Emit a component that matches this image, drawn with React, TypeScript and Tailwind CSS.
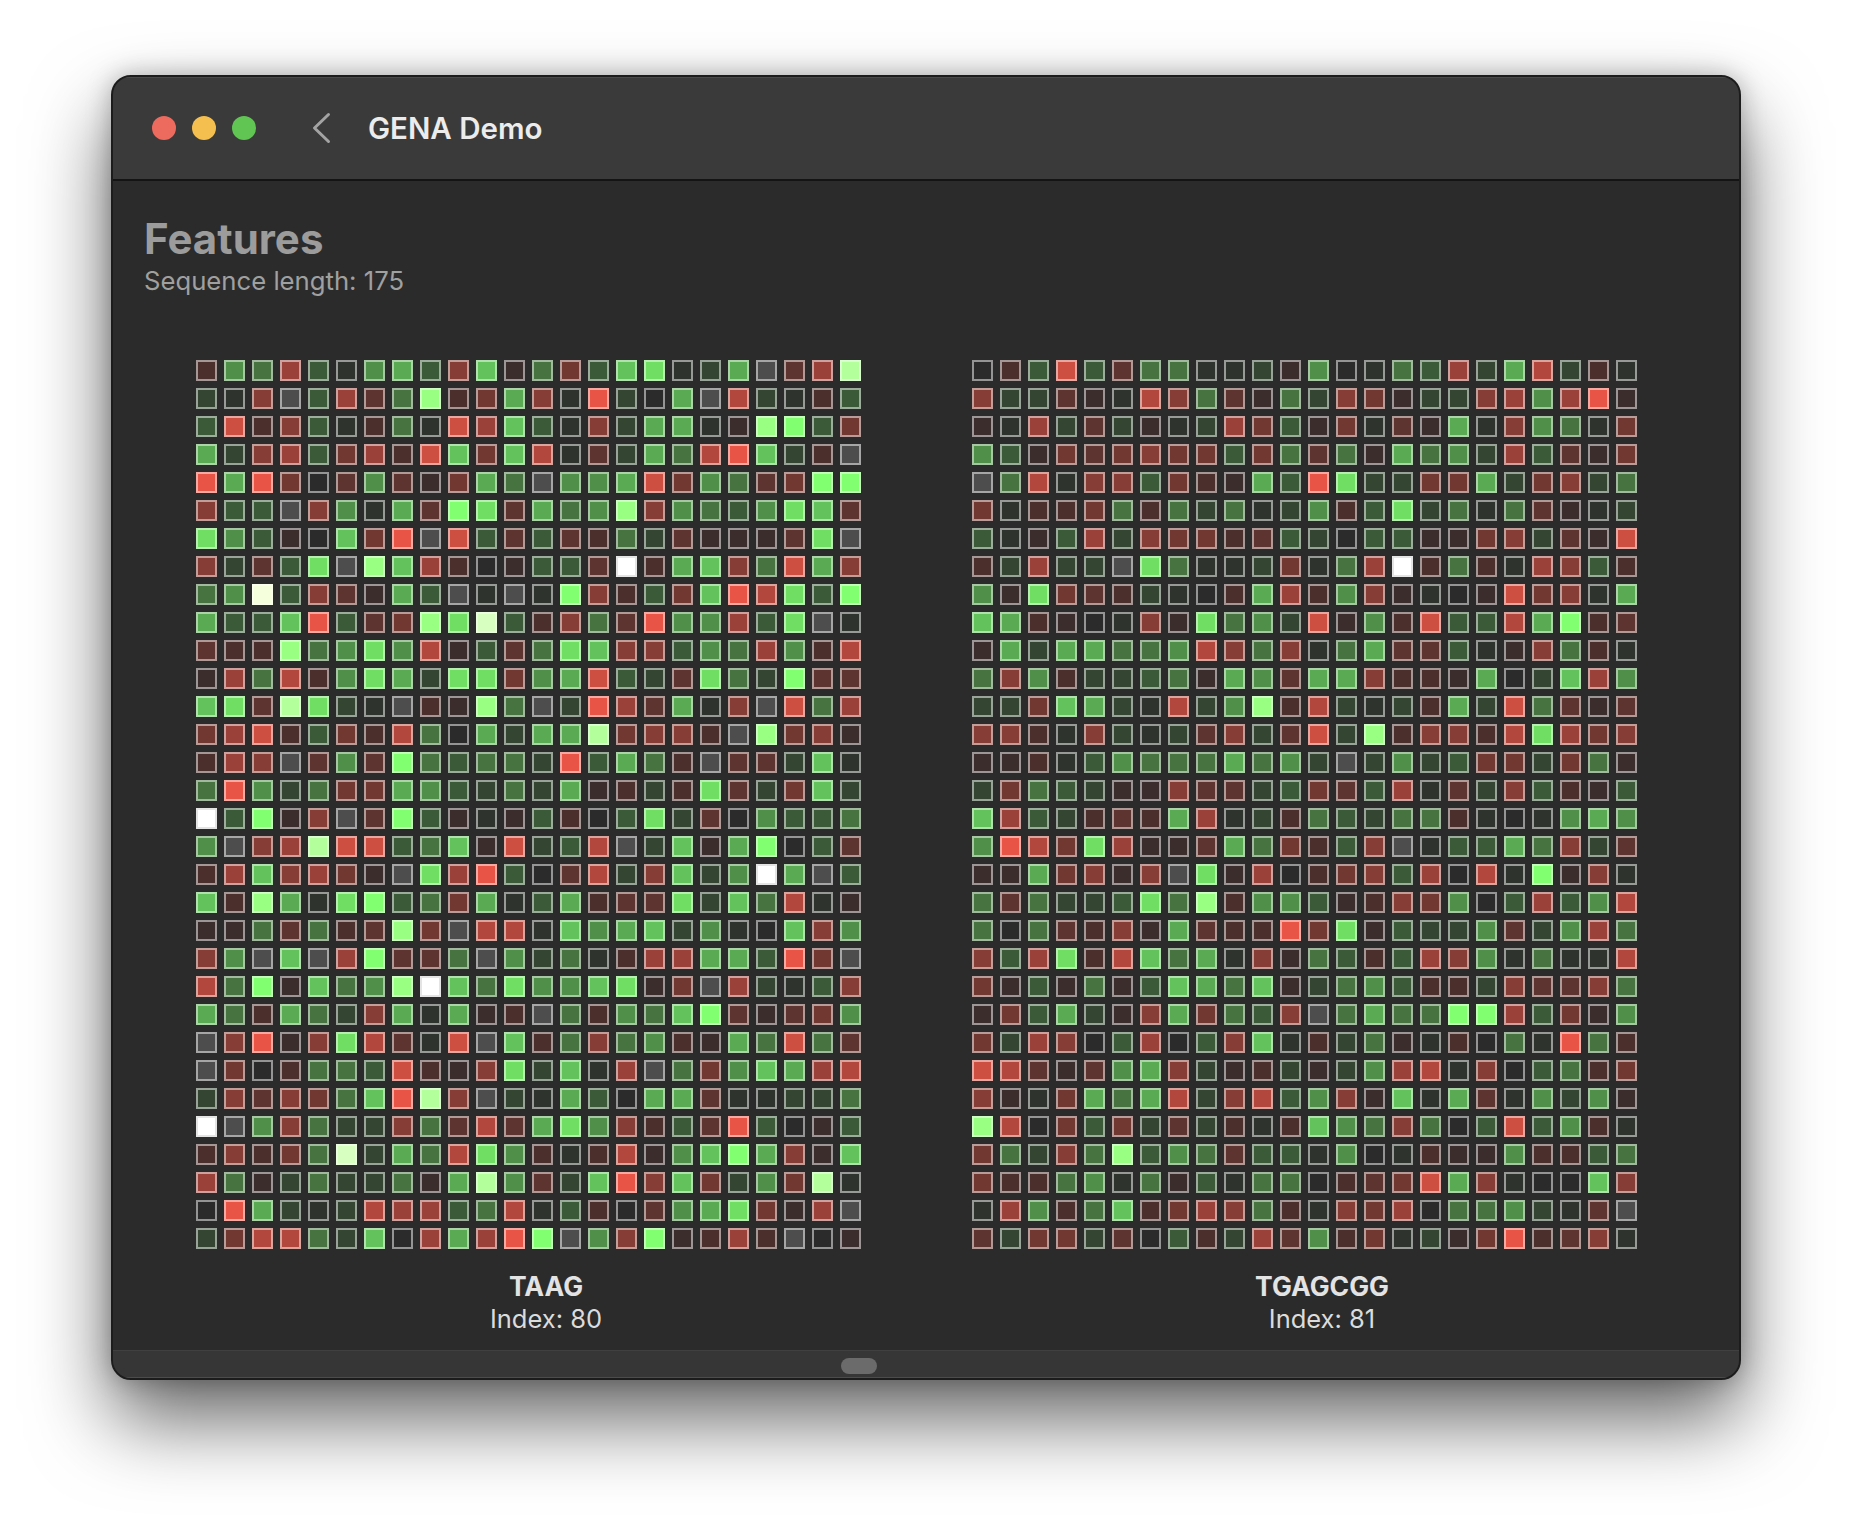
const cellColors: Record<string, string> = {
  ".": "bg-[#2b2b2b]",
  _: "bg-[#4d4d4d]",
  a: "bg-[#2e342d]",
  b: "bg-[#344632]",
  c: "bg-[#3b5a38]",
  d: "bg-[#46733f]",
  e: "bg-[#4f8f49]",
  f: "bg-[#5aa953]",
  g: "bg-[#63c25b]",
  h: "bg-[#6fde62]",
  i: "bg-[#82ff70]",
  j: "bg-[#99ff82]",
  k: "bg-[#b3ff9c]",
  Z: "bg-[#d6ffc0]",
  Y: "bg-[#f6ffdc]",
  A: "bg-[#3a2d2c]",
  B: "bg-[#4a2f2d]",
  C: "bg-[#5e3430]",
  D: "bg-[#713832]",
  E: "bg-[#853d36]",
  F: "bg-[#9a423a]",
  G: "bg-[#b2483d]",
  H: "bg-[#cc4f41]",
  I: "bg-[#e85547]",
  W: "bg-white",
};

const taag = [
  "BedFcaefcEgAdDcghabf_CFk",
  "baE_cFCdjBDfEaIb.f_GbaBc",
  "cHBEcaBdaHFgcaEbffaAjicD",
  "fbEFcDFBHgDgGaCbfdGIgbB_",
  "IfID.CeCADfd_eefHDedCDii",
  "Ecc_EeafCihCfdejEedcehgC",
  "hecA.gDI_HcCcCBdbCAAACh_",
  "EbCch_jgFB.AccCWBfgEdHfE",
  "deYcECAfc_a_aiEBcDgIGhci",
  "fccgIcCDjhZcBEdCIeeFch_a",
  "CBBjdeheGAcCdhgEEcedFeBG",
  "AFdGBehfbhhDefHcbChdbiCC",
  "ghCkhba_BAjd_bIFCfaE_HdF",
  "DFHBcDBGd.fbffkDEEB_jDEA",
  "BFE_CeCidcddbIcfdB_CCbga",
  "dIebdDDfecbdbfABbBhCbDgb",
  "WciAE_CicAaAcB.chbC.eccd",
  "e_EFkHHcdgAHbcG_bgAfi.cC",
  "BFgEFDA_hFIc.CGbEgbeWf_c",
  "gBjfahicdDfacfBCChbgdGaA",
  "AAdCdBCjD_GGagefgbea.gEe",
  "Ee_g_FiCCd_ebdaBFFffcID_",
  "GdiAgdejWgdheeghAD_FbacE",
  "fdBfdbEfafAB_dBedgiCACDe",
  "_EIAEhGCaH_gBdEdeBAfdHdC",
  "_D.BddcHBAEhbgaF_dDegfFG",
  "bECEDdgIkE_bafc.ffCaabbd",
  "W_eEdbbEdCGCfheEBcCIc.Ac",
  "BEBDdZbfdGheBaBGAegifEAg",
  "FdAbdbbdAfkeCbgIEgDbeDka",
  ".IfbabGFFcdGacB.CefhDAF_",
  "bDGGdbg.FfFIi_eEiABFB_.A",
];

const tgagcgg = [
  ".BcHcCddaabAe.adcFbfGbBa",
  "EbbCAaGEdCAdbEDAbbEFeFIA",
  "AaFbCbAabFDcADaCAfaEedaD",
  "ecADCDEDDcDdCdAfdebFcCAD",
  "_dGaEEcDBAfcIhbbDDfbDEbd",
  "DaBBDdBdbdabeBchbdadCAab",
  "caAcFbEDDBCcb.ccAADEbCAH",
  "BbFbb_hdaabDadFWBdBaFEcB",
  "eAhDCBba.BfFBeEAa.AHDEaf",
  "gfBA.aEAhdebHAeBHccGfiBC",
  "AfbffddeGEdEadfCCcaAEdBa",
  "dEeBbbcdAfeCffEBBAf.bgFe",
  "bbDgfbaGbejBGbabBfbHdCAC",
  "EEBaEbabCEbCHbjBEEBGhFDE",
  "AABacedddfdeb_bebcDDbDdA",
  "bDdcbAAECCbcDCcFaCbEcBAc",
  "gFcbBCBfFabBdcbddBa.aefe",
  "eIGDhFAACfdDBcE_accfdEbC",
  "AAfDEAE_hAF.BDEcF.GaiAEa",
  "dCdbbchdjBeecABEDe.cFceG",
  "d.dCBEAfCBBIDhAcbbeCbeFd",
  "EcFhBGgdfaEAdcBcFEeadaaG",
  "DAcAdAcgfdgAbdecBBbECCEd",
  "ADcfbAEfDdcE_dfddiiFcDAe",
  "DbFE.cF.cEgaBbdAaB.daIdB",
  "HGCACefEbABbAbeFGaE.cdBD",
  "EAaDfdfGbEGceEAgafCaebeA",
  "jG.DcDbCbBaBgedEd.cHceBa",
  "DdbEdjcedCccae.aBAAeBBcd",
  "DBBdeadAcadd.BCDHfEa..gE",
  "aFeBdgBDFEdBaEDF.ddebaC_",
  "CbDDbC.cBbFCeBDabADIBCEa",
];

function Heatmap({ rows, name, index }: { rows: string[]; name: string; index: number }) {
  return (
    <div className="w-[700px]">
      <div className="grid grid-cols-[repeat(24,21px)] gap-[7px]">
        {rows.flatMap((row, y) =>
          row.split("").map((code, x) => (
            <div
              key={`${y}-${x}`}
              className={`h-[21px] border-2 ${
                code === "W" ? "border-[#e4e4e4]" : "border-white/50"
              } ${cellColors[code]}`}
            />
          )),
        )}
      </div>
      <div className="mt-[21px] text-center">
        <p className="text-[26.5px] leading-[32px] font-bold text-[#e3e3e3]">{name}</p>
        <p className="text-[25.5px] leading-[33px] text-[#dcdcdc]">Index: {index}</p>
      </div>
    </div>
  );
}

export default function App() {
  return (
    <div className="min-h-screen overflow-hidden bg-white pt-[75px] font-['Inter',sans-serif]">
      <div className="mx-auto flex h-[1305px] w-[1630px] flex-col overflow-hidden rounded-[20px] border-2 border-[#1c1c1c] bg-[#2b2b2b] shadow-[0_40px_80px_rgba(0,0,0,0.6),0_0_24px_rgba(0,0,0,0.25)]">
        <header className="flex h-[104px] shrink-0 items-center border-b-2 border-[#141414] bg-[#3a3a3a] pl-[39px] shadow-[inset_0_1px_0_#4a4a4a]">
          <span className="h-6 w-6 rounded-full bg-[#ed6a5e]" />
          <span className="ml-4 h-6 w-6 rounded-full bg-[#f4bf4f]" />
          <span className="ml-4 h-6 w-6 rounded-full bg-[#61c554]" />
          <svg className="ml-[55px] h-[32px] w-[20px]" viewBox="0 0 20 32" fill="none">
            <path d="M17.5 2.5 3.5 16l14 13.5" stroke="#a3a3a3" strokeWidth="3" strokeLinecap="round" strokeLinejoin="round" />
          </svg>
          <h1 className="ml-[37px] text-[29.5px] font-semibold text-[#ececec]">GENA Demo</h1>
        </header>

        <main className="min-h-0 flex-1 px-[31px] pt-[34px]">
          <h2 className="text-[42px] leading-[48px] font-bold text-[#9c9c9c]">Features</h2>
          <p className="mt-px text-[25.7px] leading-[34px] text-[#a0a0a0]">Sequence length: 175</p>
          <div className="mt-[62px] ml-[52px] flex gap-[76px]">
            <Heatmap rows={taag} name="TAAG" index={80} />
            <Heatmap rows={tgagcgg} name="TGAGCGG" index={81} />
          </div>
        </main>

        <footer className="flex h-[28px] shrink-0 items-center justify-center border-t border-b border-t-[#404040] border-b-[#4c4c4c] bg-[#363636] pt-[3px]">
          <span className="mr-[134px] h-4 w-9 rounded-lg bg-[#6b6b6b]" />
        </footer>
      </div>
    </div>
  );
}
